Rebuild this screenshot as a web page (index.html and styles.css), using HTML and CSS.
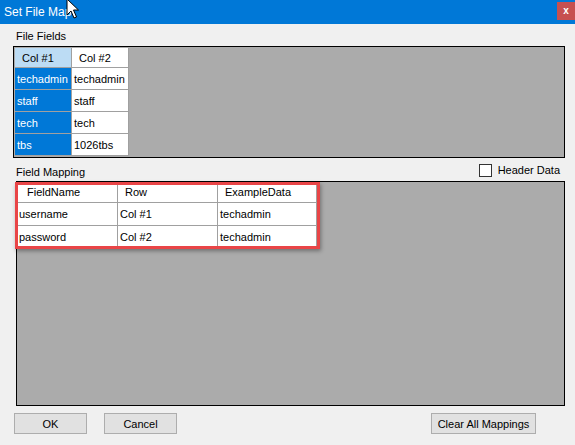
FILE: index.html
```html
<!DOCTYPE html>
<html lang="en">
<head>
    <meta charset="UTF-8">
    <title>Set File Map</title>
    <link rel="stylesheet" href="styles.css">
</head>
<body>
    <div class="window">
        <div class="titlebar">
            <span class="title">Set File Map</span>
            <div class="close">x</div>
            <svg class="cursor" width="14" height="22" viewBox="0 0 14 22">
                <path d="M1 1 L1 17 L5 13 L8 20 L10.5 19 L7.5 12 L12.5 12 Z" fill="#fff" stroke="#000" stroke-width="1" stroke-linejoin="miter"/>
            </svg>
        </div>

        <div class="label">File Fields</div>
        <div class="grid fields">
            <div class="cells">
                <div class="hd sel">Col #1</div><div class="hd">Col #2</div>
                <div class="c on">techadmin</div><div class="c">techadmin</div>
                <div class="c on">staff</div><div class="c">staff</div>
                <div class="c on">tech</div><div class="c">tech</div>
                <div class="c on">tbs</div><div class="c">1026tbs</div>
            </div>
        </div>

        <div class="maprow">
            <span class="label">Field Mapping</span>
            <label class="check"><span class="box"></span>Header Data</label>
        </div>
        <div class="grid mapping">
            <div class="cells">
                <div class="hd first">FieldName</div><div class="hd">Row</div><div class="hd">ExampleData</div>
                <div class="c">username</div><div class="c">Col #1</div><div class="c">techadmin</div>
                <div class="c">password</div><div class="c">Col #2</div><div class="c">techadmin</div>
            </div>
            <div class="mark"></div>
        </div>

        <div class="buttons">
            <button class="btn">OK</button>
            <button class="btn">Cancel</button>
            <button class="btn wide">Clear All Mappings</button>
        </div>
    </div>
</body>
</html>
```

FILE: styles.css
```css
body { margin: 0; background: #f0f0f0; font-family: "Liberation Sans", Arial, sans-serif; font-size: 11px; color: #000; }
.window { width: 575px; height: 445px; overflow: hidden; position: relative; }

.titlebar { height: 24px; background: #0078d7; color: #fff; display: flex; align-items: center; position: relative; }
.title { font-size: 12px; padding-left: 4px; margin-top: -1px; }
.close { margin-left: auto; align-self: flex-start; margin-top: 2px; width: 18px; height: 18px; background: #c75050; color: #fff; font-weight: bold; font-size: 10px; text-align: center; line-height: 18px; }
.cursor { position: absolute; left: 66px; top: -2px; }

.label { display: block; margin-left: 16px; height: 14px; line-height: 14px; }
.fields .cells, .mapping .cells { display: grid; }
.titlebar + .label { margin-top: 5px; margin-bottom: 3px; }

.grid { background: #ababab; border: 1px solid #000; box-sizing: border-box; position: relative; }
.fields { margin-left: 13px; width: 552px; height: 112px; padding: 1px; }
.fields .cells { grid-template-columns: 57px 57px; grid-template-rows: 20px repeat(4, 22px); width: 114px; }

.hd, .c { box-sizing: border-box; border-right: 1px solid #a0a0a0; border-bottom: 1px solid #a0a0a0; white-space: nowrap; overflow: hidden; display: flex; align-items: center; }
.hd { background: #fff; padding-left: 7px; }
.hd.sel { background: #bcdcf4; }
.c { background: #fff; padding-left: 2px; }
.c.on { background: #0078d7; color: #fff; }

.maprow { display: flex; justify-content: space-between; align-items: center; height: 22px; margin-top: 1px; }
.maprow .label { margin-top: 3px; }
.check { display: flex; align-items: center; margin-right: 15px; margin-top: 0; }
.box { width: 11px; height: 11px; border: 1px solid #333; background: #fff; margin-right: 6px; }

.mapping { margin-left: 16px; width: 549px; height: 225px; }
.mapping .cells { grid-template-columns: 101px 100px 99px; grid-template-rows: 21px 23px 22px; width: 300px; }
.mapping .hd.first { padding-left: 10px; }
.mapping .c { padding-left: 2px; }
.mark { position: absolute; left: -2px; top: 0; width: 305px; height: 67px; box-sizing: border-box; border: 3px solid #e94547; box-shadow: 1px 2px 4px rgba(0,0,0,0.35); }

.buttons { display: flex; margin: 7px 0 0 14px; }
.btn { height: 21px; width: 73px; padding: 0; background: #e1e1e1; border: 1px solid #adadad; font-family: inherit; font-size: 11px; color: #000; margin-right: 17px; }
.btn.wide { width: 105px; margin-left: auto; margin-right: 39px; }
```
